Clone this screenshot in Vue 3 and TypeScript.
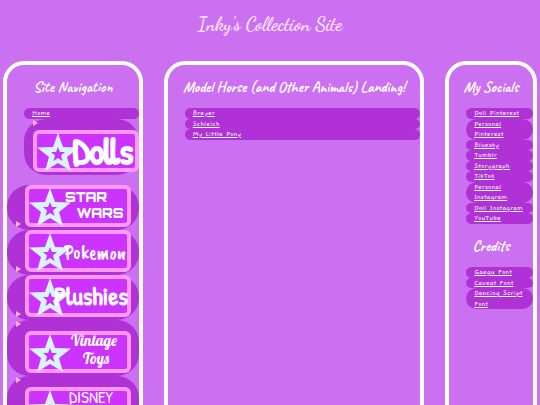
<script setup lang="ts">
interface Badge {
  lines: string[]
  kind: string
  layout: 'stacked' | 'inline'
}

const badges: Badge[] = [
  { lines: ['STAR', 'WARS'], kind: 'wars', layout: 'inline' },
  { lines: ['Pokemon'], kind: 'pokemon', layout: 'inline' },
  { lines: ['Plushies'], kind: 'plushies', layout: 'inline' },
  { lines: ['Vintage', 'Toys'], kind: 'vintage', layout: 'stacked' },
  { lines: ['DISNEY'], kind: 'disney', layout: 'stacked' },
]

const positions: Record<string, number[][]> = {
  wars: [[61, 17], [75, 33]],
  pokemon: [[70, 29]],
  plushies: [[66, 30]],
  vintage: [[69, 15], [71, 33]],
  disney: [[66, 16]],
}

const collections = ['Breyer', 'Schleich', 'My Little Pony']
const socials = [
  'Doll Pinterest',
  'Personal Pinterest',
  'Bluesky',
  'Tumblr',
  'Storygraph',
  'TikTok',
  'Personal Instagram',
  'Doll Instagram',
  'YouTube',
]
const credits = ['Gaegu Font', 'Caveat Font', 'Dancing Script Font']

const starPath =
  'M25 3 30 17 46 17.5 34 27 38 41 25 33 12 41 16 27 4 17.5 20 17Z' +
  'M25 17 23 22 18 22 22 25.5 20.5 31 25 28 29.5 31 28 25.5 32 22 27 22Z'
</script>

<template>
  <div class="page">
    <header><h1>Inky's Collection Site</h1></header>
    <div class="columns">
      <nav class="panel">
        <h2>Site Navigation</h2>
        <ul class="links">
          <li><a href="#">Home</a></li>
          <li class="group stacked">
            <details>
              <summary>
                <svg class="badge" viewBox="0 0 106 42" role="img" aria-label="Dolls">
                  <rect class="frame" x="2" y="2" width="102" height="38" rx="4" />
                  <path class="star" fill-rule="evenodd" :d="starPath" />
                  <text class="dolls" x="70" y="34">Dolls</text>
                </svg>
              </summary>
            </details>
          </li>
        </ul>
        <ul class="links groups">
          <li v-for="badge in badges" :key="badge.kind" class="group" :class="badge.layout">
            <details>
              <summary>
                <svg class="badge" viewBox="0 0 106 42" role="img" :aria-label="badge.lines.join(' ')">
                  <rect class="frame" x="2" y="2" width="102" height="38" rx="4" />
                  <path class="star" fill-rule="evenodd" :d="starPath" />
                  <text
                    v-for="(line, i) in badge.lines"
                    :key="line"
                    :class="badge.kind"
                    :x="positions[badge.kind][i][0]"
                    :y="positions[badge.kind][i][1]"
                  >{{ line }}</text>
                </svg>
              </summary>
            </details>
          </li>
        </ul>
      </nav>
      <main class="panel">
        <h2>Model Horse (and Other Animals) Landing!</h2>
        <ul class="links">
          <li v-for="item in collections" :key="item"><a href="#">{{ item }}</a></li>
        </ul>
      </main>
      <aside class="panel">
        <h2>My Socials</h2>
        <ul class="links">
          <li v-for="item in socials" :key="item"><a href="#">{{ item }}</a></li>
        </ul>
        <h2>Credits</h2>
        <ul class="links">
          <li v-for="item in credits" :key="item"><a href="#">{{ item }}</a></li>
        </ul>
      </aside>
    </div>
  </div>
</template>

<style>
html {
  scrollbar-width: none;
}
body {
  margin: 0;
  background: #cc70f2;
}
</style>

<style scoped>
.page {
  color: #fff;
  font-family: "Gaegu", "DejaVu Sans", sans-serif;
  font-size: 8px;
  font-weight: 400;
  line-height: 1.32;
}
h1 {
  margin: 0;
  padding: 12px 0 25px;
  font-family: "Dancing Script", "Liberation Serif", serif;
  font-size: 19px;
  font-weight: 600;
  line-height: 24px;
  text-align: center;
  color: #ffe8ff;
}
.columns {
  display: grid;
  grid-template-columns: 140fr 261fr 92fr;
  gap: 21px;
  padding: 0 3px;
}
.panel {
  min-width: 0;
  border: 4px solid #fff;
  border-radius: 21px;
  padding-bottom: 20px;
}
h2 {
  margin: 0;
  padding: 14px 0 12px;
  font-family: "Caveat", "Lato", sans-serif;
  font-size: 15px;
  font-weight: 600;
  line-height: 17px;
  text-align: center;
  white-space: nowrap;
}
.links {
  margin: 0;
  padding: 0 0 0 17px;
  list-style: none;
}
.links li {
  padding: 0 7px 0 8px;
  border-radius: 22px;
  background: #b032d6;
}
a {
  color: #fff;
}
.links.groups {
  margin-top: 10px;
  padding-left: 0;
}
.links .group {
  padding-right: 0;
  padding-left: 9px;
}
summary {
  display: flex;
  align-items: flex-end;
  gap: 4px;
  padding-bottom: 3px;
  list-style: none;
}
summary::before {
  content: "";
  flex: none;
  border-left: 5px solid #ffb3c8;
  border-top: 3px solid transparent;
  border-bottom: 3px solid transparent;
}
.stacked summary {
  flex-direction: column;
  align-items: flex-start;
  padding-top: 1px;
}
.groups .stacked .badge {
  margin-left: 9px;
}
.badge {
  display: block;
  flex: none;
  width: 106px;
  height: 42px;
}
.frame {
  fill: #cc33ff;
  stroke: #ff99ff;
  stroke-width: 4;
}
.star {
  fill: #d8f4ff;
}
text {
  fill: #fff;
  font-family: "Caveat Brush", "Caveat", "Lato", sans-serif;
  font-weight: 400;
  text-anchor: middle;
}
.dolls,
.plushies {
  font-family: "Patrick Hand", "Lato", sans-serif;
  stroke: #fff;
  stroke-linejoin: round;
}
.dolls {
  font-size: 36px;
  stroke-width: 2;
}
.plushies {
  font-size: 25px;
  stroke-width: 1;
}
.wars {
  font-family: "Orbitron", "Lato", sans-serif;
  font-size: 13px;
  font-weight: 900;
}
.pokemon {
  font-size: 20px;
}
.vintage {
  font-family: "Lobster", "Caveat Brush", "Caveat", sans-serif;
  font-size: 15px;
}
.disney {
  font-family: "Patrick Hand", "Lato", sans-serif;
  font-size: 17px;
}
</style>
